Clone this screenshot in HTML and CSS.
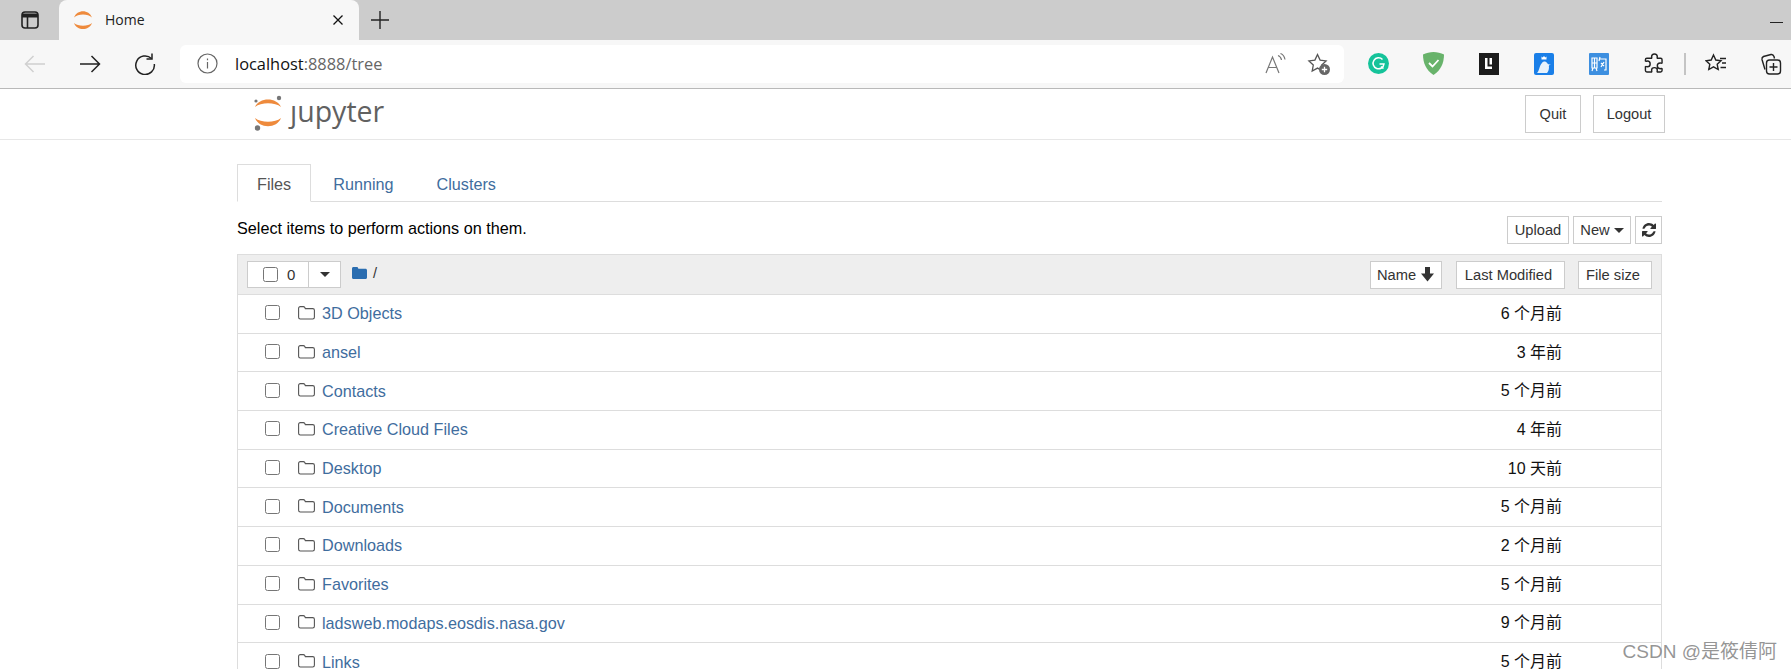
FILE: index.html
```html
<!DOCTYPE html>
<html>
<head>
<meta charset="utf-8">
<title>Home</title>
<link rel="stylesheet" href="styles.css">
</head>
<body>

<!-- browser tab strip -->
<div class="tabstrip">
  <div class="tab-slot">
    <svg width="20" height="20" viewBox="0 0 20 20" fill="none" stroke="#222" stroke-width="1.6"><rect x="2" y="2" width="16" height="16" rx="3"/><path d="M2 5.5h16" stroke-width="4"/><path d="M7.5 6v12"/></svg>
  </div>
  <div class="tab">
    <svg class="favicon" width="20" height="20" viewBox="0 0 20 20" fill="#ee8a3c"><path d="M1 7.500C4 -1 16 -1 19 7.500 15 3.500 5 3.500 1 7.500Z"/><path d="M1 13C5 16.500 15 16.500 19 13 16 21 4 21 1 13Z"/></svg>
    <span class="tab-title">Home</span>
    <svg width="12" height="12" viewBox="0 0 12 12" stroke="#111" stroke-width="1.3"><path d="M1.500 1.500l9 9M10.500 1.500l-9 9"/></svg>
  </div>
  <svg class="newtab" width="18" height="18" viewBox="0 0 18 18" stroke="#222" stroke-width="1.4"><path d="M9 0v18M0 9h18"/></svg>
  <div class="minimize"></div>
</div>

<!-- browser toolbar -->
<div class="toolbar">
  <div class="tool">
    <svg width="22" height="22" viewBox="0 0 22 22" fill="none" stroke="#d0d0d0" stroke-width="1.5"><path d="M21 11H1.500M9.500 3l-8 8 8 8"/></svg>
  </div>
  <div class="tool">
    <svg width="22" height="22" viewBox="0 0 22 22" fill="none" stroke="#222" stroke-width="1.5"><path d="M1 11h19.500M12.500 3l8 8-8 8"/></svg>
  </div>
  <div class="tool">
    <svg width="22" height="22" viewBox="0 0 22 22" fill="none" stroke="#222" stroke-width="1.5"><path d="M17.500 5.500A9.300 9.300 0 1 0 20.300 11"/><path d="M18 0.500v5.500h-5.500"/></svg>
  </div>
  <div class="address">
    <svg class="info" width="21" height="21" viewBox="0 0 21 21" fill="none" stroke="#666" stroke-width="1.2"><circle cx="10.500" cy="10.500" r="9.500"/><path d="M10.500 9v6.500M10.500 5.500v1.800"/></svg>
    <span class="host">localhost<span class="port">:8888/tree</span></span>
    <svg class="read" width="22" height="22" viewBox="0 0 22 22" fill="none" stroke="#777" stroke-width="1.2"><path d="M1 20L7.500 4 14 20M3.500 14.500h8"/><path d="M13 2.500c2 .8 3.200 2.400 3.500 4.500M15.500 0.500c2.500 1 4 3 4.500 6"/></svg>
    <svg class="addfav" width="24" height="24" viewBox="0 0 24 24"><path d="M10.500 2.500l2.600 5.600 6 .8-4.400 4.200 1.100 6-5.300-3-5.300 3 1.100-6-4.400-4.200 6-.8z" fill="none" stroke="#555" stroke-width="1.300"/><circle cx="17.500" cy="17.500" r="5.500" fill="#666"/><path d="M17.500 14.800v5.400M14.800 17.500h5.400" stroke="#fff" stroke-width="1.300"/></svg>
  </div>
  <div class="tool first-ext">
    <svg width="21" height="21" viewBox="0 0 21 21"><circle cx="10.500" cy="10.500" r="10.500" fill="#15c39a"/><path d="M14.500 6.500A5.500 5.500 0 1 0 16 11h-4.500M13 13.500l2.500 2" fill="none" stroke="#fff" stroke-width="1.500"/></svg>
  </div>
  <div class="tool">
    <svg width="21" height="23" viewBox="0 0 21 23"><path d="M10.500 0C14 0 18 1 21 2.500 21 11 18 18 10.500 23 3 18 0 11 0 2.500 3 1 7 0 10.500 0Z" fill="#68b36b"/><path d="M6 11l3.500 3.500L15.500 8" fill="none" stroke="#fff" stroke-width="1.800"/></svg>
  </div>
  <div class="tool">
    <svg width="20" height="22" viewBox="0 0 20 22"><rect width="20" height="22" fill="#1c1c1c"/><path d="M6 5v11h7v-2.500H8.500V5zM10.500 5h2.500v6.500h-2.500z" fill="#fff"/></svg>
  </div>
  <div class="tool">
    <svg width="20" height="22" viewBox="0 0 20 22"><rect width="20" height="22" rx="2" fill="#1a7fe8"/><path d="M3 20c2-1 2.500-8 5-10 1-2 4-2 5 0 1 1 1.500 2 4 1-2 1-2.500 2-2 3 0 3-1 5-2 6z" fill="#e8f2fb"/><path d="M7.500 3.500l1.200 1 1.300-1.500 1.300 1.500 1.200-1v3h-5z" fill="#fff"/></svg>
  </div>
  <div class="tool">
    <svg width="20" height="22" viewBox="0 0 20 22"><rect width="20" height="22" rx="1" fill="#3d8fe0"/><path d="M3 5h5v10H3zM5.500 5v10M3 10h5M4 15l-1 3M7 15l1 3M11 4l-1 4M11 6h6v11h-2M12 10l3 3M15 9l-3 5" fill="none" stroke="#fff" stroke-width="1.200"/></svg>
  </div>
  <div class="tool">
    <svg width="20" height="22" viewBox="0 0 20 22" fill="none" stroke="#222" stroke-width="1.500"><path d="M8 4c0-4 6-4 6 0 0 1-.5 1 0 1.500h3.500c1 0 1.500.5 1.500 1.500v3.500c-.5.500-1 0-2 0-4 0-4 6 0 6 1 0 1.500-.5 2 0v2c0 1-.5 1.500-1.500 1.500H14c-.5-.5 0-1 0-2 0-3.500-6-3.500-6 0 0 1 .5 1.500 0 2H3c-1 0-1.500-.5-1.500-1.500v-4c.5-.5 1 0 2 0 4 0 4-6 0-6-1 0-1.500.5-2 0V7C1.500 6 2 5.500 3 5.500h5C8.500 5 8 5 8 4Z" transform="scale(.95)"/></svg>
  </div>
  <div class="tool-sep"></div>
  <div class="tool">
    <svg width="22" height="22" viewBox="0 0 22 22" fill="none" stroke="#222" stroke-width="1.400"><path d="M8.500 2l2.300 5 5.200.7-3.800 3.600 1 5.200-4.700-2.600-4.700 2.600 1-5.200L1 7.700 6.200 7z"/><path d="M15 5.500h6M17 10h4M15.500 14.500H21"/></svg>
  </div>
  <div class="tool">
    <svg width="22" height="22" viewBox="0 0 22 22" fill="none" stroke="#222" stroke-width="1.400"><path d="M5 16.500L2 6.500C1.700 5 2.500 4 3.500 3.500L11 1.500c1.500-.3 2.500.5 3 2l.5 2"/><rect x="6.500" y="7" width="14" height="14" rx="3"/><path d="M13.500 10v8M9.500 14h8"/></svg>
  </div>
</div>

<!-- jupyter header -->
<div class="header">
  <div class="logo">
    <svg width="32" height="36" viewBox="0 0 32 36"><path d="M1 12C5 2 23 2 27 12 21 7 7 7 1 12Z" fill="#ee8a3c"/><path d="M1 23C7 28 21 28 27 23 23 34 5 34 1 23Z" fill="#ee8a3c"/><circle cx="25" cy="3" r="2.200" fill="#767677"/><circle cx="2" cy="6" r="1.600" fill="#767677"/><circle cx="3.500" cy="33" r="2.700" fill="#767677"/></svg>
    <span class="logo-text">ȷupyter</span>
  </div>
  <div class="header-btns">
    <a class="head-btn quit">Quit</a>
    <a class="head-btn logout">Logout</a>
  </div>
</div>

<div class="main">
  <div class="tabs">
    <a class="nb-tab active">Files</a>
    <a class="nb-tab">Running</a>
    <a class="nb-tab">Clusters</a>
  </div>

  <div class="actions">
    <span class="hint">Select items to perform actions on them.</span>
    <div class="action-btns">
      <a class="btn btn-upload">Upload</a>
      <a class="btn btn-new">New<i class="caret"></i></a>
      <a class="btn btn-icon">
        <svg width="14" height="14" viewBox="0 0 14 14" fill="#333"><path d="M13.500 8.500C12.800 11.700 10.200 14 7 14c-1.800 0-3.400-.7-4.700-1.900L1 13.400c-.4.400-1 .1-1-.4V8.600c0-.3.300-.6.600-.6H5c.5 0 .8.600.4 1L4 10.300c.8.800 1.900 1.200 3 1.200 1.600 0 3.100-.9 3.900-2.300l.7-1h1.600c.200 0 .3.100.3.300zM14 5.400c0 .3-.3.600-.6.600H9c-.5 0-.8-.6-.4-1L10 3.700C9.200 2.900 8.100 2.500 7 2.500c-1.600 0-3.100.9-3.900 2.300l-.7 1H.8c-.2 0-.3-.1-.3-.3C1.200 2.300 3.800 0 7 0c1.800 0 3.400.7 4.700 1.900L13 .6c.4-.4 1-.1 1 .4z"/></svg>
      </a>
    </div>
  </div>

  <div class="list">
    <div class="list-head">
      <div class="select-group">
        <span class="select-count"><input type="checkbox" class="check"> 0</span>
        <span class="select-drop"><i class="caret dark"></i></span>
      </div>
      <svg class="root-folder" width="15" height="12" viewBox="0 0 15 12" fill="#2a6db0"><path d="M0 1.500C0 .6.600 0 1.500 0h3.200c.8 0 1.300.5 1.500 1.200l.2.500h7C14.400 1.700 15 2.300 15 3.200v7.300c0 .9-.6 1.500-1.500 1.500h-12C.6 12 0 11.400 0 10.500z"/></svg>
      <span class="root-slash">/</span>
      <div class="sort-btns">
        <a class="btn sort-name">Name
          <svg width="15" height="15" viewBox="0 0 15 15" fill="#333"><path d="M5 0h5v6.500h4L7.500 14.500 1 6.500h4z"/></svg>
        </a>
        <a class="btn sort-date">Last Modified</a>
        <a class="btn sort-size">File size</a>
      </div>
    </div>

    <div class="row"><input type="checkbox" class="check"><svg class="folder" width="17" height="14" viewBox="0 0 17 14" fill="none" stroke="#555" stroke-width="1.100"><path d="M.6 2.300C.6 1.300 1.300.6 2.300.6h3c.8 0 1.200.4 1.500 1l.5 1h7.400c1 0 1.700.7 1.700 1.700v7c0 1-.7 1.700-1.700 1.700H2.300c-1 0-1.700-.7-1.700-1.700z"/></svg><a class="name">3D Objects</a><span class="date">6 个月前</span></div>
    <div class="row"><input type="checkbox" class="check"><svg class="folder" width="17" height="14" viewBox="0 0 17 14" fill="none" stroke="#555" stroke-width="1.100"><path d="M.6 2.300C.6 1.300 1.300.6 2.300.6h3c.8 0 1.200.4 1.500 1l.5 1h7.400c1 0 1.700.7 1.700 1.700v7c0 1-.7 1.700-1.700 1.700H2.300c-1 0-1.700-.7-1.700-1.700z"/></svg><a class="name">ansel</a><span class="date">3 年前</span></div>
    <div class="row"><input type="checkbox" class="check"><svg class="folder" width="17" height="14" viewBox="0 0 17 14" fill="none" stroke="#555" stroke-width="1.100"><path d="M.6 2.300C.6 1.300 1.300.6 2.300.6h3c.8 0 1.200.4 1.500 1l.5 1h7.400c1 0 1.700.7 1.700 1.700v7c0 1-.7 1.700-1.700 1.700H2.300c-1 0-1.700-.7-1.700-1.700z"/></svg><a class="name">Contacts</a><span class="date">5 个月前</span></div>
    <div class="row"><input type="checkbox" class="check"><svg class="folder" width="17" height="14" viewBox="0 0 17 14" fill="none" stroke="#555" stroke-width="1.100"><path d="M.6 2.300C.6 1.300 1.300.6 2.300.6h3c.8 0 1.200.4 1.500 1l.5 1h7.400c1 0 1.700.7 1.700 1.700v7c0 1-.7 1.700-1.700 1.700H2.300c-1 0-1.700-.7-1.700-1.700z"/></svg><a class="name">Creative Cloud Files</a><span class="date">4 年前</span></div>
    <div class="row"><input type="checkbox" class="check"><svg class="folder" width="17" height="14" viewBox="0 0 17 14" fill="none" stroke="#555" stroke-width="1.100"><path d="M.6 2.300C.6 1.300 1.300.6 2.300.6h3c.8 0 1.200.4 1.500 1l.5 1h7.400c1 0 1.700.7 1.700 1.700v7c0 1-.7 1.700-1.700 1.700H2.300c-1 0-1.700-.7-1.700-1.700z"/></svg><a class="name">Desktop</a><span class="date">10 天前</span></div>
    <div class="row"><input type="checkbox" class="check"><svg class="folder" width="17" height="14" viewBox="0 0 17 14" fill="none" stroke="#555" stroke-width="1.100"><path d="M.6 2.300C.6 1.300 1.300.6 2.300.6h3c.8 0 1.200.4 1.500 1l.5 1h7.400c1 0 1.700.7 1.700 1.700v7c0 1-.7 1.700-1.700 1.700H2.300c-1 0-1.700-.7-1.700-1.700z"/></svg><a class="name">Documents</a><span class="date">5 个月前</span></div>
    <div class="row"><input type="checkbox" class="check"><svg class="folder" width="17" height="14" viewBox="0 0 17 14" fill="none" stroke="#555" stroke-width="1.100"><path d="M.6 2.300C.6 1.300 1.300.6 2.300.6h3c.8 0 1.200.4 1.500 1l.5 1h7.400c1 0 1.700.7 1.700 1.700v7c0 1-.7 1.700-1.700 1.700H2.300c-1 0-1.700-.7-1.700-1.700z"/></svg><a class="name">Downloads</a><span class="date">2 个月前</span></div>
    <div class="row"><input type="checkbox" class="check"><svg class="folder" width="17" height="14" viewBox="0 0 17 14" fill="none" stroke="#555" stroke-width="1.100"><path d="M.6 2.300C.6 1.300 1.300.6 2.300.6h3c.8 0 1.200.4 1.500 1l.5 1h7.400c1 0 1.700.7 1.700 1.700v7c0 1-.7 1.700-1.700 1.700H2.300c-1 0-1.700-.7-1.700-1.700z"/></svg><a class="name">Favorites</a><span class="date">5 个月前</span></div>
    <div class="row"><input type="checkbox" class="check"><svg class="folder" width="17" height="14" viewBox="0 0 17 14" fill="none" stroke="#555" stroke-width="1.100"><path d="M.6 2.300C.6 1.300 1.300.6 2.300.6h3c.8 0 1.200.4 1.500 1l.5 1h7.400c1 0 1.700.7 1.700 1.700v7c0 1-.7 1.700-1.700 1.700H2.300c-1 0-1.700-.7-1.700-1.700z"/></svg><a class="name">ladsweb.modaps.eosdis.nasa.gov</a><span class="date">9 个月前</span></div>
    <div class="row"><input type="checkbox" class="check"><svg class="folder" width="17" height="14" viewBox="0 0 17 14" fill="none" stroke="#555" stroke-width="1.100"><path d="M.6 2.300C.6 1.300 1.300.6 2.300.6h3c.8 0 1.200.4 1.500 1l.5 1h7.400c1 0 1.700.7 1.700 1.700v7c0 1-.7 1.700-1.700 1.700H2.300c-1 0-1.700-.7-1.700-1.700z"/></svg><a class="name">Links</a><span class="date">5 个月前</span></div>
  </div>
</div>

<div class="watermark">CSDN @是筱倩阿</div>

</body>
</html>
```

FILE: styles.css
```css
html, body {
  margin: 0;
  height: 669px;
  overflow: hidden;
}

body {
  font-family: "Liberation Sans", "Noto Sans CJK SC", sans-serif;
  font-size: 16.200px;
  color: #000;
  background-color: #fff;
  position: relative;
}

/* browser chrome */
.tabstrip {
  display: flex;
  align-items: center;
  height: 40px;
  background-color: #cccccc;
}

.tab-slot {
  display: flex;
  align-items: center;
  justify-content: center;
  width: 59px;
  height: 40px;
}

.tab {
  display: flex;
  align-items: center;
  box-sizing: border-box;
  width: 300px;
  height: 40px;
  padding: 0 15px 0 14px;
  background-color: #f7f7f7;
  border-radius: 8px 8px 0 0;
}

.tab-title {
  flex: 1;
  margin-left: 12px;
  padding-bottom: 2px;
  font-family: "Open Sans", sans-serif;
  font-size: 14px;
  color: #222;
}

.newtab {
  margin-left: 12px;
}

.minimize {
  width: 13px;
  height: 1px;
  margin: 4px 8px 0 auto;
  background-color: #222;
}

.toolbar {
  display: flex;
  align-items: center;
  box-sizing: border-box;
  height: 49px;
  padding-left: 7px;
  padding-bottom: 1px;
  background-color: #f7f7f7;
  border-bottom: 1px solid #b9b9b9;
  overflow: hidden;
}

.tool {
  display: flex;
  flex: none;
  align-items: center;
  justify-content: center;
  width: 55px;
  height: 38px;
}

.first-ext {
  margin-left: 7px;
}

.tool-sep {
  flex: none;
  width: 2px;
  height: 22px;
  margin: 0 2px 0 3px;
  background-color: #c4c4c4;
}

.address {
  display: flex;
  flex: none;
  align-items: center;
  box-sizing: border-box;
  width: 1164px;
  height: 38px;
  margin-left: 8px;
  padding-left: 17px;
  background-color: #fff;
  border-radius: 6px;
}

.host {
  flex: 1;
  margin-left: 17px;
  font-family: "Open Sans", sans-serif;
  font-size: 16.400px;
  color: #111;
}

.port {
  color: #666;
}

.read {
  margin-right: 20px;
}

.addfav {
  margin-right: 13px;
}

/* jupyter header */
.header {
  display: flex;
  justify-content: space-between;
  box-sizing: border-box;
  height: 51px;
  padding: 6px 126px 0 254px;
  border-bottom: 1px solid #e7e7e7;
}

.logo {
  display: flex;
  align-items: flex-start;
  height: 40px;
}

.logo-text {
  margin-left: 4px;
  margin-top: -2px;
  font-family: "Open Sans", sans-serif;
  font-size: 28.500px;
  font-weight: 500;
  line-height: 36px;
  color: #616161;
}

.header-btns {
  display: flex;
  gap: 12px;
}

.head-btn {
  box-sizing: border-box;
  height: 38px;
  line-height: 36px;
  text-align: center;
  font-size: 14.600px;
  color: #333;
  border: 1px solid #ccc;
}

.quit {
  width: 56px;
}

.logout {
  width: 72px;
}

.main {
  box-sizing: border-box;
  width: 1425px;
  margin-left: 237px;
  padding-top: 24px;
}

.tabs {
  display: flex;
  height: 37px;
  border-bottom: 1px solid #ddd;
}

.nb-tab {
  box-sizing: border-box;
  height: 38px;
  margin-right: 3px;
  padding: 0 20px;
  line-height: 41px;
  color: #3f6d9e;
}

.nb-tab.active {
  margin-right: 2px;
  padding: 0 19px;
  color: #555;
  background-color: #fff;
  border: 1px solid #ddd;
  border-bottom-color: #fff;
  line-height: 39px;
}

.actions {
  display: flex;
  align-items: center;
  justify-content: space-between;
  height: 28px;
  padding-top: 14px;
  padding-bottom: 10px;
}

.hint {
  padding-bottom: 4px;
}

.action-btns {
  display: flex;
  gap: 4px;
}

.btn {
  display: inline-flex;
  align-items: center;
  justify-content: center;
  box-sizing: border-box;
  height: 28px;
  padding: 0 7px;
  font-size: 14.700px;
  color: #333;
  background-color: #fff;
  border: 1px solid #ccc;
}

.btn-upload {
  width: 62px;
  padding: 0;
}

.btn-new {
  width: 58px;
  padding: 0;
}

.btn-icon {
  width: 27px;
  padding: 0;
}

.caret {
  display: inline-block;
  width: 0;
  height: 0;
  margin-left: 4px;
  border-top: 5px solid #333;
  border-left: 5px solid transparent;
  border-right: 5px solid transparent;
}

/* file list */
.list {
  border-left: 1px solid #ddd;
  border-right: 1px solid #ddd;
}

.list-head {
  display: flex;
  align-items: center;
  box-sizing: border-box;
  height: 40px;
  padding: 0 9px;
  background-color: #eee;
  border-top: 1px solid #ddd;
}

.select-group {
  display: flex;
  box-sizing: border-box;
  width: 94px;
  height: 27px;
  background-color: #fff;
  border: 1px solid #ccc;
}

.select-count {
  display: flex;
  align-items: center;
  box-sizing: border-box;
  width: 61px;
  padding-left: 15px;
  font-size: 15px;
  color: #333;
  border-right: 1px solid #ccc;
}

.select-drop {
  display: flex;
  flex: 1;
  align-items: center;
  justify-content: center;
}

.select-drop .caret {
  margin-left: 0;
}

.check {
  flex: none;
  box-sizing: border-box;
  width: 15px;
  height: 15px;
  margin: 0;
}

.select-count .check {
  margin-right: 9px;
}

.root-folder {
  margin-left: 11px;
  margin-top: -3px;
}

.root-slash {
  margin-left: 6px;
  margin-top: -3px;
  font-size: 14.600px;
  color: #333;
}

.sort-btns {
  display: flex;
  margin-left: auto;
}

.sort-name {
  width: 72px;
  gap: 4px;
  margin-right: 14px;
  padding: 0 4px;
}

.sort-date {
  width: 109px;
  margin-right: 13px;
  padding: 0 4px 0 0;
}

.sort-size {
  width: 74px;
  padding: 0 4px 0 0;
}

.row {
  display: flex;
  align-items: center;
  box-sizing: border-box;
  height: 38.700px;
  padding-left: 27px;
  border-top: 1px solid #ddd;
}

.row .check {
  margin-bottom: 2px;
}

.folder {
  flex: none;
  margin-left: 18px;
  margin-top: -2px;
}

.name {
  margin-left: 7px;
  color: #3f6d9e;
}

.date {
  margin-left: auto;
  margin-right: 99px;
  margin-bottom: 4px;
  font-size: 16px;
  color: #111;
}

.watermark {
  position: absolute;
  top: 636px;
  right: 14px;
  font-size: 19px;
  color: rgba(130, 130, 130, 0.85);
}
```
